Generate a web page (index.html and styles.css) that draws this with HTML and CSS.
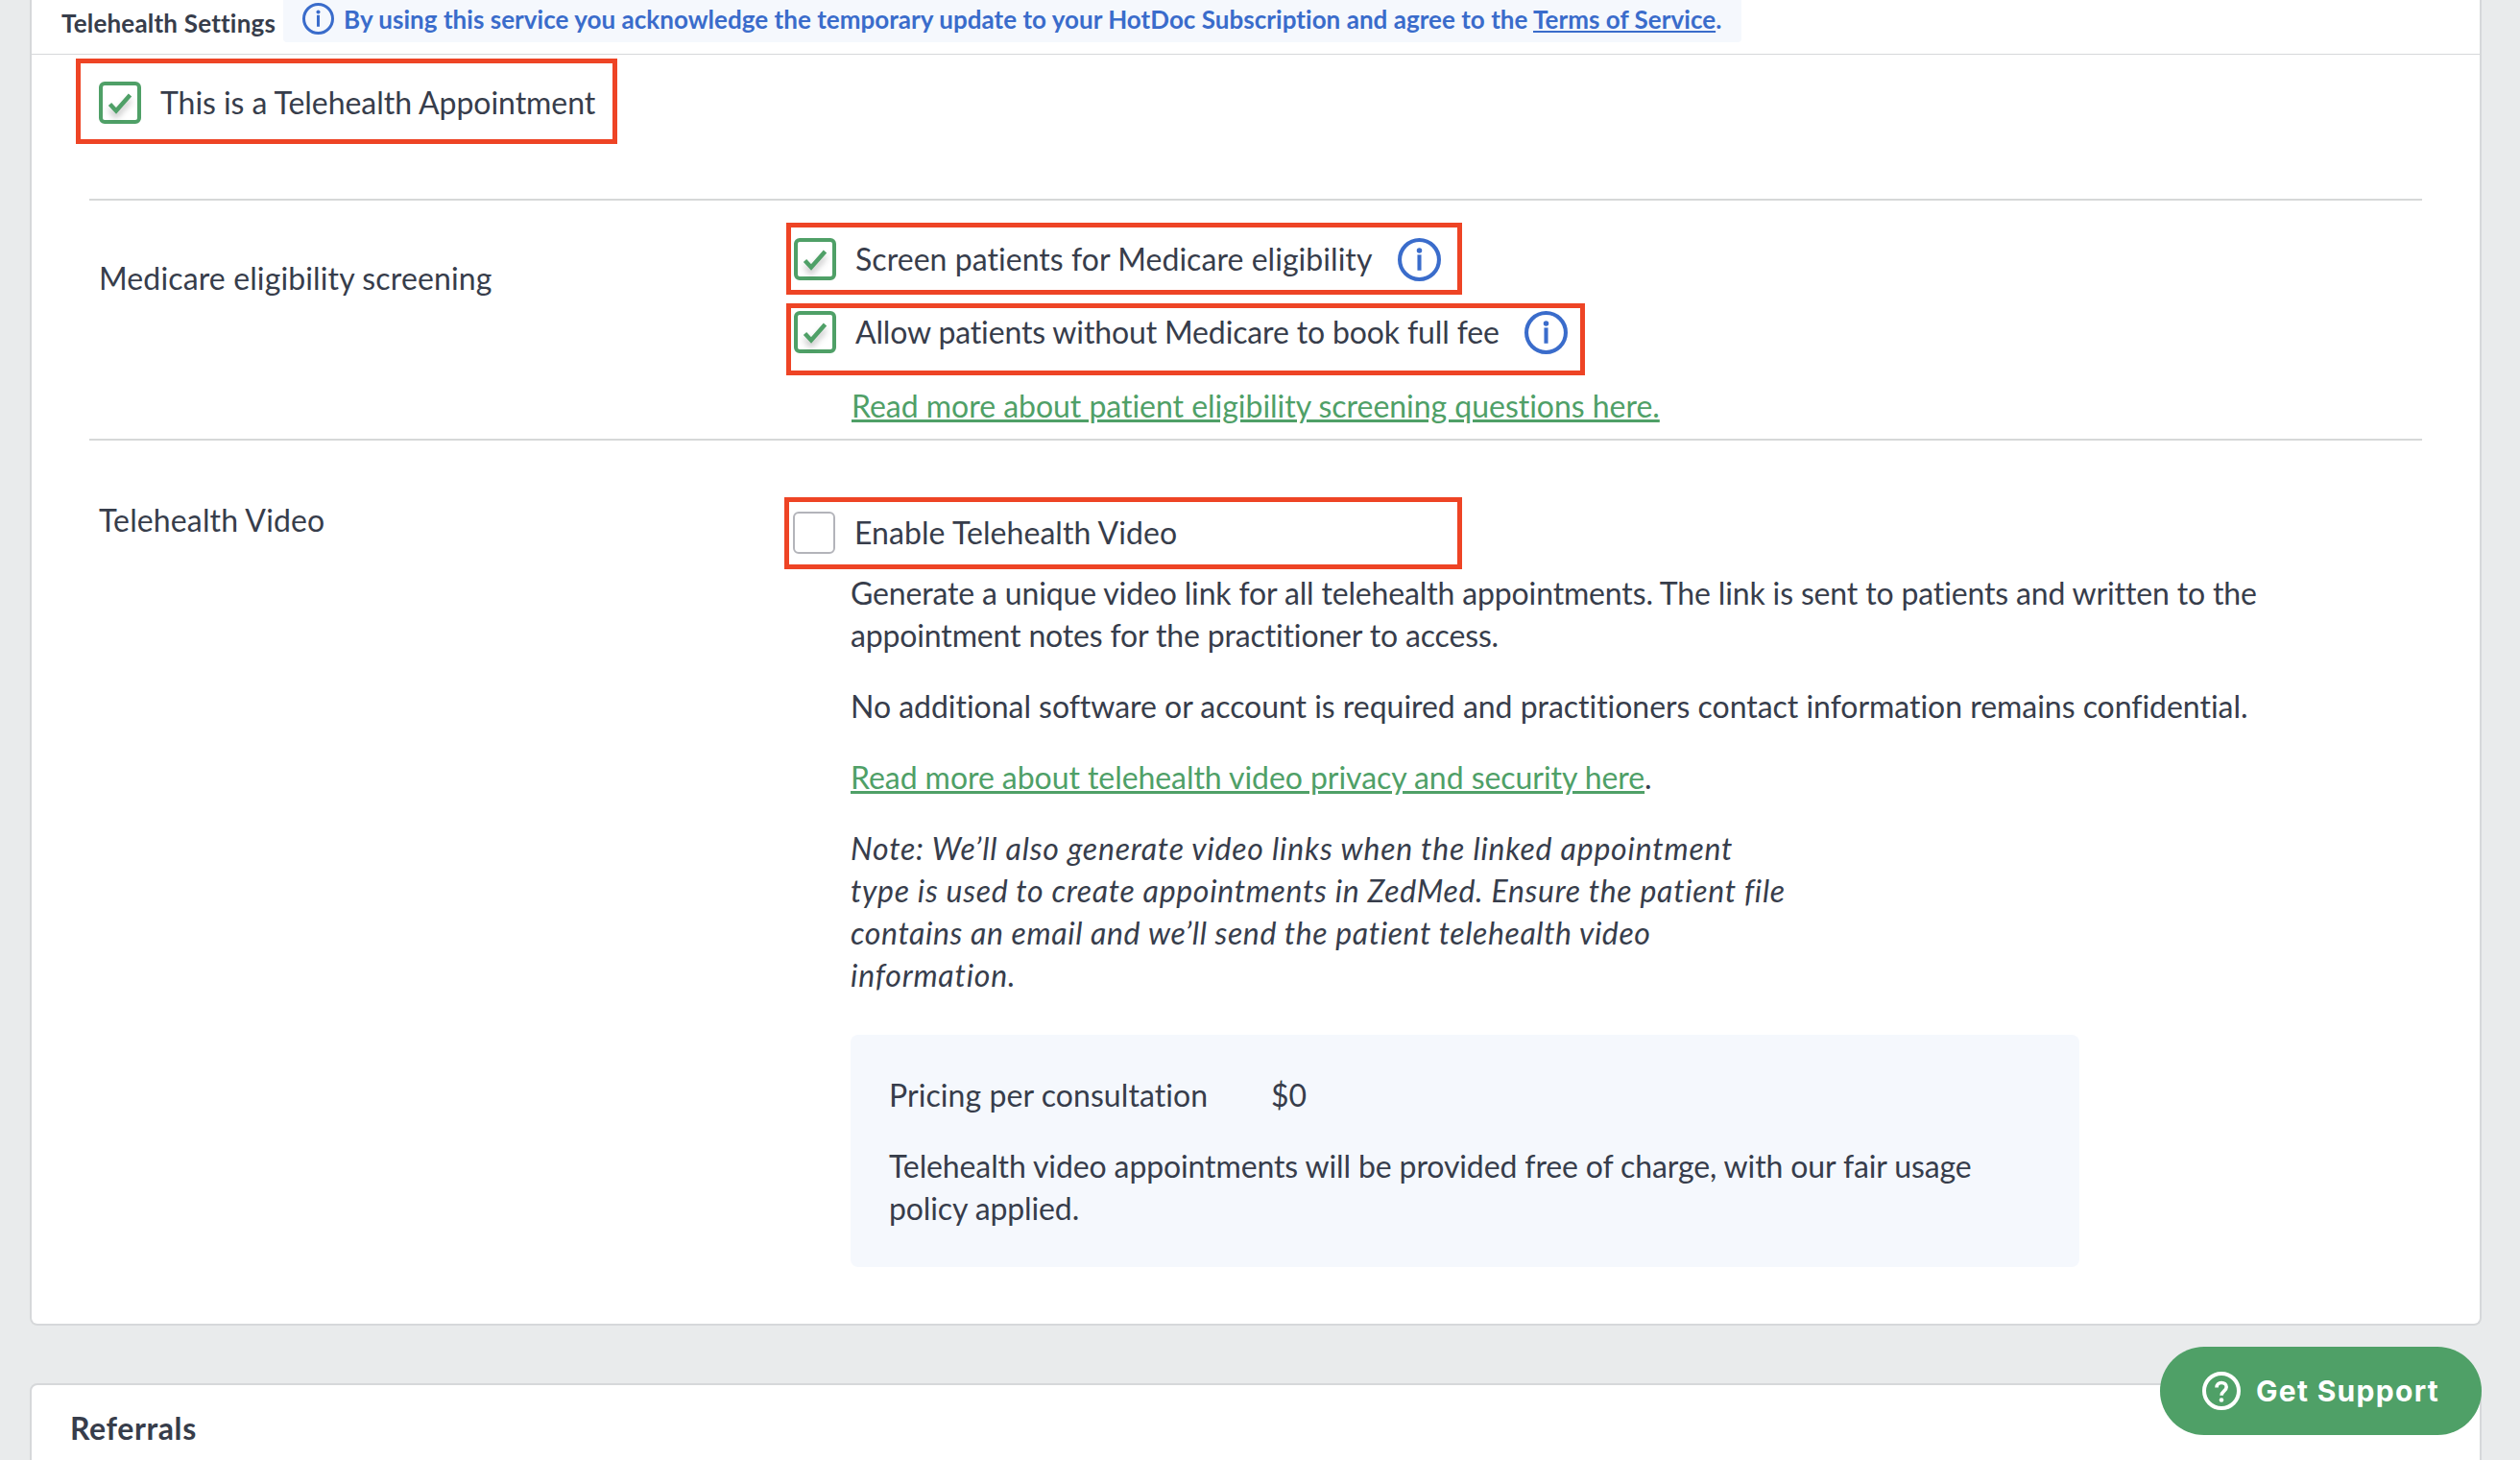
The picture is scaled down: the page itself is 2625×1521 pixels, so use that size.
FILE: index.html
```html
<!DOCTYPE html>
<html lang="en">
  <head>
    <meta charset="utf-8">
    <title>Telehealth Settings</title>
    <link rel="stylesheet" href="styles.css">
  </head>
  <body>
    <svg class="symbols">
      <symbol id="icon-info" viewBox="0 0 44 44">
        <circle cx="22" cy="22" r="20" fill="none" stroke="currentColor" stroke-width="4"/>
        <circle cx="22" cy="12.6" r="2.7" fill="currentColor"/>
        <path d="M22 17v16" fill="none" stroke="currentColor" stroke-width="4"/>
      </symbol>
      <symbol id="icon-check" viewBox="0 0 36 36">
        <path d="M7.500 19.500l6.500 7L28.500 10" fill="none" stroke="currentColor" stroke-width="4.500"/>
      </symbol>
    </svg>

    <section class="card telehealth">
      <header class="card-header">
        <h2 class="card-title">Telehealth Settings</h2>
        <div class="notice">
          <svg class="notice-icon"><use href="#icon-info"/></svg>
          <span class="notice-text">By using this service you acknowledge the temporary update to your HotDoc Subscription and agree to the <a href="#">Terms of Service</a>.</span>
        </div>
      </header>

      <div class="appointment">
        <label class="option highlight option-appointment">
          <span class="checkbox checked"><svg><use href="#icon-check"/></svg></span>
          <span class="option-text">This is a Telehealth Appointment</span>
        </label>
      </div>

      <div class="row row-medicare">
        <h3 class="row-label">Medicare eligibility screening</h3>
        <div class="row-body">
          <label class="option highlight option-screen">
            <span class="checkbox checked"><svg><use href="#icon-check"/></svg></span>
            <span class="option-text">Screen patients for Medicare eligibility</span>
            <svg class="info"><use href="#icon-info"/></svg>
          </label>
          <label class="option highlight option-allow">
            <span class="checkbox checked"><svg><use href="#icon-check"/></svg></span>
            <span class="option-text">Allow patients without Medicare to book full fee</span>
            <svg class="info"><use href="#icon-info"/></svg>
          </label>
          <p class="read-more"><a href="#">Read more about patient eligibility screening questions here.</a></p>
        </div>
      </div>

      <div class="row row-video">
        <h3 class="row-label">Telehealth Video</h3>
        <div class="row-body">
          <label class="option highlight option-video">
            <span class="checkbox"></span>
            <span class="option-text">Enable Telehealth Video</span>
          </label>
          <div class="description">
            <p class="generate">Generate a unique video link for all telehealth appointments. The link is sent to patients and written to the<br>appointment notes for the practitioner to access.</p>
            <p class="software">No additional software or account is required and practitioners contact information remains confidential.</p>
            <p class="privacy"><a href="#">Read more about telehealth video privacy and security here</a>.</p>
            <p class="note"><span class="wide">Note: We’ll also generate video links when the linked appointment</span><br>type is used to create appointments in ZedMed. Ensure the patient file<br><span class="narrow">contains an email and we’ll send the patient telehealth video</span><br><span class="wide">information.</span></p>
            <div class="pricing">
              <p class="price"><span class="price-label">Pricing per consultation</span><span>$0</span></p>
              <p class="fair-usage">Telehealth video appointments will be provided free of charge, with our fair usage<br>policy applied.</p>
            </div>
          </div>
        </div>
      </div>
    </section>

    <section class="card referrals">
      <h2 class="referrals-title">Referrals</h2>
    </section>

    <button class="support">
      <svg class="support-icon" viewBox="0 0 40 40">
        <circle cx="20" cy="20" r="18" fill="none" stroke="currentColor" stroke-width="4"/>
        <path d="M15 16.500c0-3.200 2.200-5 5-5s5.200 1.800 5.200 4.600c0 4-5.100 4.200-5.100 8.600" fill="none" stroke="currentColor" stroke-width="3.600"/>
        <circle cx="20" cy="29.500" r="2.300" fill="currentColor"/>
      </svg>
      <span class="support-text">Get Support</span>
    </button>
  </body>
</html>
```
FILE: styles.css
```css
* {
  box-sizing: border-box;
}
body {
  margin: 0;
  height: 1521px;
  overflow: hidden;
  background: #e9ebec;
  color: #373d4b;
  font-family: Lato, sans-serif;
  font-size: 32px;
  font-variant-ligatures: none;
  line-height: 44px;
}
h2, h3, p {
  margin: 0;
}
p, .option-text, .row-label, .notice-text, .card-title {
  white-space: nowrap;
}
a {
  color: #4fa067;
  text-decoration: underline;
}
.symbols {
  position: absolute;
  width: 0;
  height: 0;
}
.card {
  margin: 0 40px 0 31px;
  border: 2px solid #d6d8da;
  background: #fff;
}
.telehealth {
  height: 1381px;
  border-top: 0;
  border-radius: 0 0 8px 8px;
}

/* header */
.card-header {
  display: flex;
  height: 57px;
  padding-left: 31px;
  border-bottom: 1px solid #d6d8da;
}
.card-title {
  width: 231px;
  padding-top: 2px;
  font-size: 26px;
  letter-spacing: 0.2px;
}
.notice {
  display: flex;
  width: 1519px;
  height: 44px;
  padding-left: 20px;
  border-radius: 0 0 4px 4px;
  background: #f5f8fd;
  color: #3a6ccb;
  font-size: 26px;
  font-weight: bold;
  letter-spacing: 0.03px;
  line-height: 41px;
}
.notice-icon {
  width: 33px;
  height: 33px;
  margin: 3px 10px 0 0;
}
.notice a {
  color: inherit;
}

/* checkboxes */
.option {
  display: flex;
  align-items: flex-start;
}
.highlight {
  border: 5px solid #ee4425;
}
.checkbox {
  flex: none;
  width: 44px;
  height: 44px;
  margin-right: 20px;
  border: 2px solid #b3b4ba;
  border-radius: 6px;
  background: #fff;
}
.checkbox.checked {
  border: 4px solid #4fa067;
  color: #4fa067;
}
.checkbox svg {
  display: block;
  width: 36px;
  height: 36px;
  filter: drop-shadow(0 5px 3px rgba(0, 0, 0, 0.25));
}
.info {
  flex: none;
  width: 45px;
  height: 45px;
  color: #3a6ccb;
}
.appointment {
  height: 150px;
  padding: 4px 0 0 46px;
}
.option-appointment {
  width: 564px;
  height: 89px;
  padding: 19px 0 0 19px;
  letter-spacing: -0.05px;
}

/* rows */
.row {
  display: flex;
  margin: 0 60px;
  padding-left: 10px;
  border-top: 2px solid #d6d8d8;
}
.row-label {
  width: 716px;
  font-size: 32px;
  font-weight: normal;
  letter-spacing: 0.13px;
}
.row-medicare {
  height: 250px;
}
.row-medicare .row-label {
  padding-top: 59px;
}
.row-medicare .row-body {
  padding-top: 23px;
}
.option-screen {
  width: 704px;
  height: 75px;
  padding: 11px 0 0 3px;
  letter-spacing: 0.05px;
}
.option-screen .option-text {
  width: 565px;
}
.option-allow {
  width: 832px;
  height: 75px;
  margin-top: 9px;
  padding: 3px 0 0 3px;
  letter-spacing: -0.14px;
}
.option-allow .option-text {
  width: 697px;
}
.read-more {
  padding: 10px 0 0 68px;
  letter-spacing: -0.03px;
}
.row-video .row-label {
  padding-top: 61px;
}
.row-video .row-body {
  padding-top: 59px;
}
.option-video {
  width: 706px;
  height: 75px;
  margin-left: -2px;
  padding: 10px 0 0 4px;
  letter-spacing: 0.07px;
}
.description {
  padding: 3px 0 0 67px;
}
.description > p {
  margin-bottom: 30px;
}
.generate {
  letter-spacing: -0.15px;
}
.software {
  letter-spacing: -0.03px;
}
.privacy {
  letter-spacing: -0.06px;
}
.note {
  font-style: italic;
  letter-spacing: 0.69px;
}
.note .wide {
  letter-spacing: 0.8px;
}
.note .narrow {
  letter-spacing: 0.6px;
}
.pricing {
  width: 1280px;
  height: 242px;
  margin-top: 40px;
  padding: 41px 40px;
  border-radius: 8px;
  background: #f5f8fd;
}
.price {
  display: flex;
  margin-bottom: 30px;
}
.price-label {
  width: 398px;
  letter-spacing: 0.07px;
}
.fair-usage {
  letter-spacing: -0.12px;
}

.referrals {
  height: 100px;
  margin-top: 60px;
  padding: 23px 40px;
  border-radius: 8px;
}
.referrals-title {
  font-size: 32px;
  letter-spacing: 0.6px;
}

.support {
  position: fixed;
  right: 40px;
  bottom: 26px;
  display: flex;
  align-items: center;
  width: 335px;
  height: 92px;
  padding: 0 0 0 44px;
  border: 0;
  border-radius: 46px;
  background: #4fa067;
  color: #fff;
  font-family: Inter, sans-serif;
  font-size: 30px;
  font-weight: bold;
  letter-spacing: 1.3px;
  white-space: nowrap;
}
.support-icon {
  width: 40px;
  height: 40px;
  margin-right: 16px;
}
```
